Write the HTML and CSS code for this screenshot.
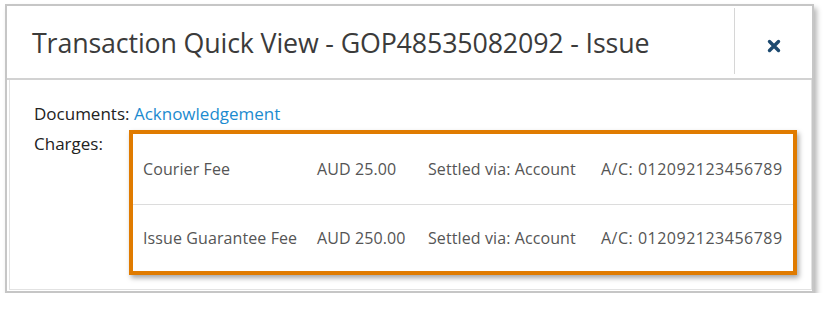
FILE: index.html
```html
<!DOCTYPE html>
<html>
<head>
    <title>Transaction Quick View</title>
    <link rel="stylesheet" href="styles.css">
</head>
<body>

<div class="modal">
  <div class="modal-header">
    <h2 class="modal-title">Transaction Quick View - GOP48535082092 - Issue</h2>
    <div class="modal-close">
      <svg width="14" height="14" viewBox="0 0 14 14">
        <path d="M2.5 2.5 L11.5 11.5 M11.5 2.5 L2.5 11.5" stroke="#1d4a70" stroke-width="3.4" stroke-linecap="round"/>
      </svg>
    </div>
  </div>

  <div class="modal-body">
    <div class="line">
      <span class="label">Documents:</span> <a href="#" class="doc-link">Acknowledgement</a>
    </div>
    <div class="charges">
      <span class="label charges-label">Charges:</span>
      <div class="charges-box">
        <div class="charge-row">
          <span>Courier Fee</span>
          <span>AUD 25.00</span>
          <span>Settled via: Account</span>
          <span>A/C: 012092123456789</span>
        </div>
        <div class="charge-row">
          <span>Issue Guarantee Fee</span>
          <span>AUD 250.00</span>
          <span>Settled via: Account</span>
          <span>A/C: 012092123456789</span>
        </div>
      </div>
    </div>
  </div>
</div>

</body>
</html>
```

FILE: styles.css
```css
body {
  margin: 0;
  background-color: #ffffff;
  font-family: "Open Sans", "Noto Sans", Arial, sans-serif;
  color: #333333;
}

.modal {
  margin: 4px 0 0 5px;
  width: 809px;
  height: 289px;
  box-sizing: border-box;
  border: 2px solid #c6c6c6;
  box-shadow: 3px 4px 5px rgba(0, 0, 0, 0.28);
  display: flex;
  flex-direction: column;
  background: #ffffff;
}

.modal-header {
  display: flex;
  height: 74px;
  border-bottom: 2px solid #d2d2d2;
  box-sizing: border-box;
}

.modal-title {
  flex: 1;
  margin: 0;
  padding: 0 0 0 25px;
  font-size: 26.8px;
  font-weight: normal;
  line-height: 74px;
  color: #3b3b3b;
  letter-spacing: -0.15px;
}

.modal-close {
  width: 78px;
  margin: 2px 0 4px;
  padding-top: 10px;
  box-sizing: border-box;
  border-left: 1px solid #d6d6d6;
  display: flex;
  align-items: center;
  justify-content: center;
}

.modal-body {
  flex: 1;
  margin: 0 0 1px 2px;
  border: 1px solid #e2e2e2;
  border-top: none;
  padding: 22px 0 0 24px;
  font-size: 17px;
}

.line {
  color: #222222;
}

.doc-link {
  color: #1c8bcf;
  text-decoration: none;
}

.label {
  color: #222222;
}

.charges {
  display: flex;
  margin-top: 1px;
}

.charges-label {
  width: 95px;
  padding-top: 6px;
}

.charges-box {
  width: 660px;
  border: 4px solid #e07b00;
  box-shadow: 2px 3px 5px rgba(0, 0, 0, 0.35);
  margin-top: 4px;
  align-self: flex-start;
}

.charge-row {
  display: grid;
  grid-template-columns: 174px 111px 173px auto;
  padding-left: 10px;
  height: 70px;
  align-items: center;
  color: #555555;
  font-size: 16px;
  letter-spacing: 0.1px;
}

.charge-row span:last-child {
  letter-spacing: 0.5px;
}

.charge-row + .charge-row {
  border-top: 1px solid #dcdcdc;
  height: 66px;
}
```
